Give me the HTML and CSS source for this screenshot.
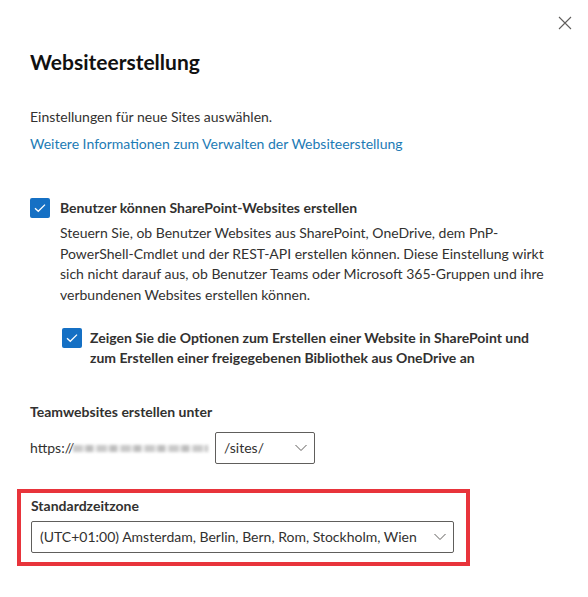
FILE: index.html
```html
<!DOCTYPE html>
<html lang="de">
<head>
<meta charset="utf-8">
<title>Websiteerstellung</title>
<link rel="stylesheet" href="styles.css">
</head>
<body>
<div class="panel">
  <div class="panel-header">
    <button class="close-btn" aria-label="Schließen">
      <svg width="14" height="14" viewBox="0 0 14 14"><path d="M1 1 L13 13 M13 1 L1 13" stroke="#605e5c" stroke-width="1.1" fill="none"/></svg>
    </button>
  </div>
  <h1 class="title">Websiteerstellung</h1>
  <p class="intro">Einstellungen für neue Sites auswählen.</p>
  <a class="link" href="#">Weitere Informationen zum Verwalten der Websiteerstellung</a>

  <div class="option">
    <div class="check-row">
      <span class="checkbox"><svg width="12" height="10" viewBox="0 0 12 10"><path d="M1 5.2 L4.3 8.3 L11 1.6" stroke="#fff" stroke-width="1.3" fill="none"/></svg></span>
      <span class="check-label">Benutzer können SharePoint-Websites erstellen</span>
    </div>
    <p class="desc">Steuern Sie, ob Benutzer Websites aus SharePoint, OneDrive, dem PnP-PowerShell-Cmdlet und der REST-API erstellen können. Diese Einstellung wirkt sich nicht darauf aus, ob Benutzer Teams oder Microsoft 365-Gruppen und ihre verbundenen Websites erstellen können.</p>
    <div class="check-row sub">
      <span class="checkbox"><svg width="12" height="10" viewBox="0 0 12 10"><path d="M1 5.2 L4.3 8.3 L11 1.6" stroke="#fff" stroke-width="1.3" fill="none"/></svg></span>
      <span class="check-label">Zeigen Sie die Optionen zum Erstellen einer Website in SharePoint und zum Erstellen einer freigegebenen Bibliothek aus OneDrive an</span>
    </div>
  </div>

  <div class="field">
    <div class="field-label">Teamwebsites erstellen unter</div>
    <div class="url-row">
      <span class="url-prefix">https://</span>
      <span class="url-blur" aria-hidden="true"></span>
      <div class="dropdown small">
        <span class="dropdown-text">/sites/</span>
        <svg class="chevron" width="12" height="8" viewBox="0 0 12 8"><path d="M0.5 1 L6 6.5 L11.5 1" stroke="#605e5c" stroke-width="1" fill="none"/></svg>
      </div>
    </div>
  </div>

  <div class="highlight">
    <div class="field-label">Standardzeitzone</div>
    <div class="dropdown wide">
      <span class="dropdown-text">(UTC+01:00) Amsterdam, Berlin, Bern, Rom, Stockholm, Wien</span>
      <svg class="chevron" width="12" height="8" viewBox="0 0 12 8"><path d="M0.5 1 L6 6.5 L11.5 1" stroke="#605e5c" stroke-width="1" fill="none"/></svg>
    </div>
  </div>
</div>
</body>
</html>
```

FILE: styles.css
```css
html, body {
  margin: 0;
  padding: 0;
  background: #fff;
}
body {
  font-family: "Lato", "Open Sans", sans-serif;
  font-size: 14px;
  line-height: 20px;
  color: #323130;
}
.panel {
  padding: 0 16px 30px 30px;
}
.panel-header {
  display: flex;
  justify-content: flex-end;
  padding-top: 16px;
}
.close-btn {
  border: 0;
  background: none;
  padding: 0;
  margin: 0;
  width: 14px;
  height: 14px;
  display: block;
}
.close-btn svg { display: block; }
.title {
  margin: 18px 0 0;
  font-size: 21px;
  line-height: 28px;
  font-weight: 700;
  color: #111;
}
.intro {
  margin: 31px 0 0;
}
.link {
  display: block;
  margin-top: 7px;
  color: #1d7bb5;
  text-decoration: none;
}
.option {
  margin-top: 44px;
}
.check-row {
  display: flex;
  align-items: flex-start;
  gap: 10px;
}
.checkbox {
  flex: none;
  width: 20px;
  height: 20px;
  border-radius: 2px;
  background: #1570c4;
  display: flex;
  align-items: center;
  justify-content: center;
}
.check-label {
  font-weight: 700;
}
.desc {
  margin: 5px 0 0 30px;
  width: 492px;
  line-height: 20.6px;
}
.check-row.sub {
  margin-top: 23px;
  padding-left: 32px;
  gap: 8px;
}
.check-row.sub .check-label {
  width: 440px;
}
.field {
  margin-top: 34px;
}
.field-label {
  font-weight: 700;
}
.url-row {
  display: flex;
  align-items: center;
  margin-top: 10px;
}
.url-prefix {
  width: 43px;
}
.url-blur {
  width: 135px;
  height: 7px;
  margin-right: 7px;
  background: repeating-linear-gradient(90deg, #c9c9c9 0 9px, #e2e2e2 9px 13px, #bdbdbd 13px 20px, #ececec 20px 24px);
  filter: blur(1.5px);
}
.dropdown {
  box-sizing: border-box;
  height: 32px;
  border: 1px solid #605e5c;
  border-radius: 2px;
  display: flex;
  align-items: center;
  justify-content: space-between;
  padding: 0 7px 0 8px;
}
.dropdown.small {
  width: 100px;
}
.dropdown.wide {
  width: 423px;
  margin-top: 5px;
}
.chevron { display: block; flex: none; }
.highlight {
  margin: 25px 0 0 -13px;
  width: 453px;
  box-sizing: border-box;
  border: 4px solid #e8343b;
  padding: 3px 13px 9px 10px;
}
```
